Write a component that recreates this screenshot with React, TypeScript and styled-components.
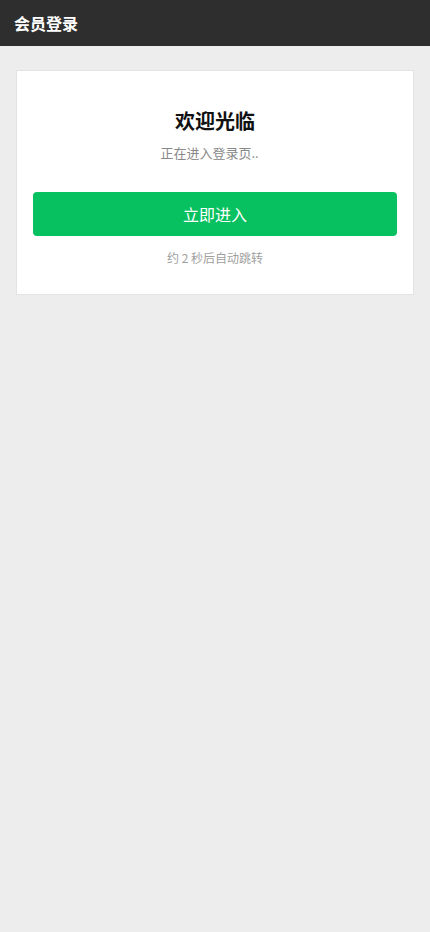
import styled, { createGlobalStyle } from "styled-components";

const GlobalStyle = createGlobalStyle`
  html, body {
    margin: 0;
    padding: 0;
    background: #ededed;
    font-family: "Noto Sans CJK SC", "Noto Sans", sans-serif;
  }
  #root {
    min-height: 100vh;
    background: #ededed;
  }
`;

const Header = styled.header`
  height: 46px;
  background: #2e2e2e;
  display: flex;
  align-items: center;
  padding: 0 14px;
  color: #ffffff;
  font-size: 16px;
  font-weight: 700;
`;

const Main = styled.main`
  padding: 24px 16px;
`;

const Card = styled.div`
  background: #ffffff;
  border: 1px solid #e3e3e3;
  padding: 36px 16px 27px;
  display: flex;
  flex-direction: column;
  align-items: center;
`;

const Title = styled.h1`
  margin: 0;
  font-size: 20px;
  line-height: 28px;
  font-weight: 700;
  color: #111111;
`;

const Subtitle = styled.p`
  margin: 8px 0 0;
  font-size: 13px;
  line-height: 20px;
  color: #888888;
`;

const Dots = styled.span`
  display: inline-block;
  width: 18px;
  text-align: left;
`;

const EnterButton = styled.button`
  margin-top: 29px;
  width: 100%;
  height: 44px;
  border: none;
  border-radius: 4px;
  background: #07c160;
  color: #ffffff;
  font-family: inherit;
  font-size: 16px;
  cursor: pointer;
`;

const Note = styled.p`
  margin: 13px 0 0;
  font-size: 12px;
  line-height: 18px;
  color: #a0a0a0;
`;

export default function App() {
  return (
    <>
      <GlobalStyle />
      <Header>会员登录</Header>
      <Main>
        <Card>
          <Title>欢迎光临</Title>
          <Subtitle>
            正在进入登录页<Dots>..</Dots>
          </Subtitle>
          <EnterButton>立即进入</EnterButton>
          <Note>约 2 秒后自动跳转</Note>
        </Card>
      </Main>
    </>
  );
}
